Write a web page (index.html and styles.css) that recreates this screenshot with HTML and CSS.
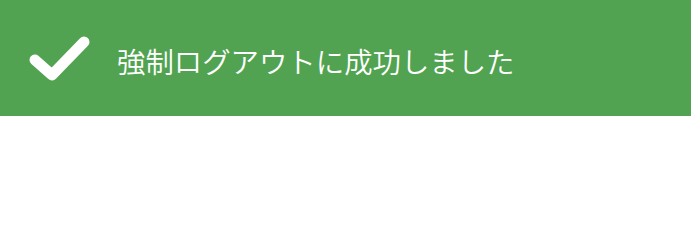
FILE: index.html
```html
<!DOCTYPE html>
<html lang="ja">
<head>
  <meta charset="UTF-8">
  <title>ログアウト</title>
  <link rel="stylesheet" href="styles.css">
</head>
<body>
  <div class="toast toast-success">
    <svg class="toast-icon" viewBox="0 0 66 50" width="66" height="50">
      <path d="M8 27 L25 42 L57 9" fill="none" stroke="#fff" stroke-width="11" stroke-linecap="round" stroke-linejoin="round"/>
    </svg>
    <span class="toast-message">強制ログアウトに成功しました</span>
  </div>
</body>
</html>
```

FILE: styles.css
```css
* {
  margin: 0;
  padding: 0;
  box-sizing: border-box;
}

body {
  background: #fff;
  font-family: "Noto Sans CJK JP", "Noto Sans", sans-serif;
}

.toast {
  display: flex;
  align-items: center;
  height: 116px;
  padding-left: 27px;
  color: #fff;
}

.toast-success {
  background-color: #51a351;
}

.toast-icon {
  flex-shrink: 0;
  margin-right: 24px;
}

.toast-message {
  font-size: 28.4px;
  font-weight: 350;
  line-height: 1;
  padding-top: 6px;
}
```
